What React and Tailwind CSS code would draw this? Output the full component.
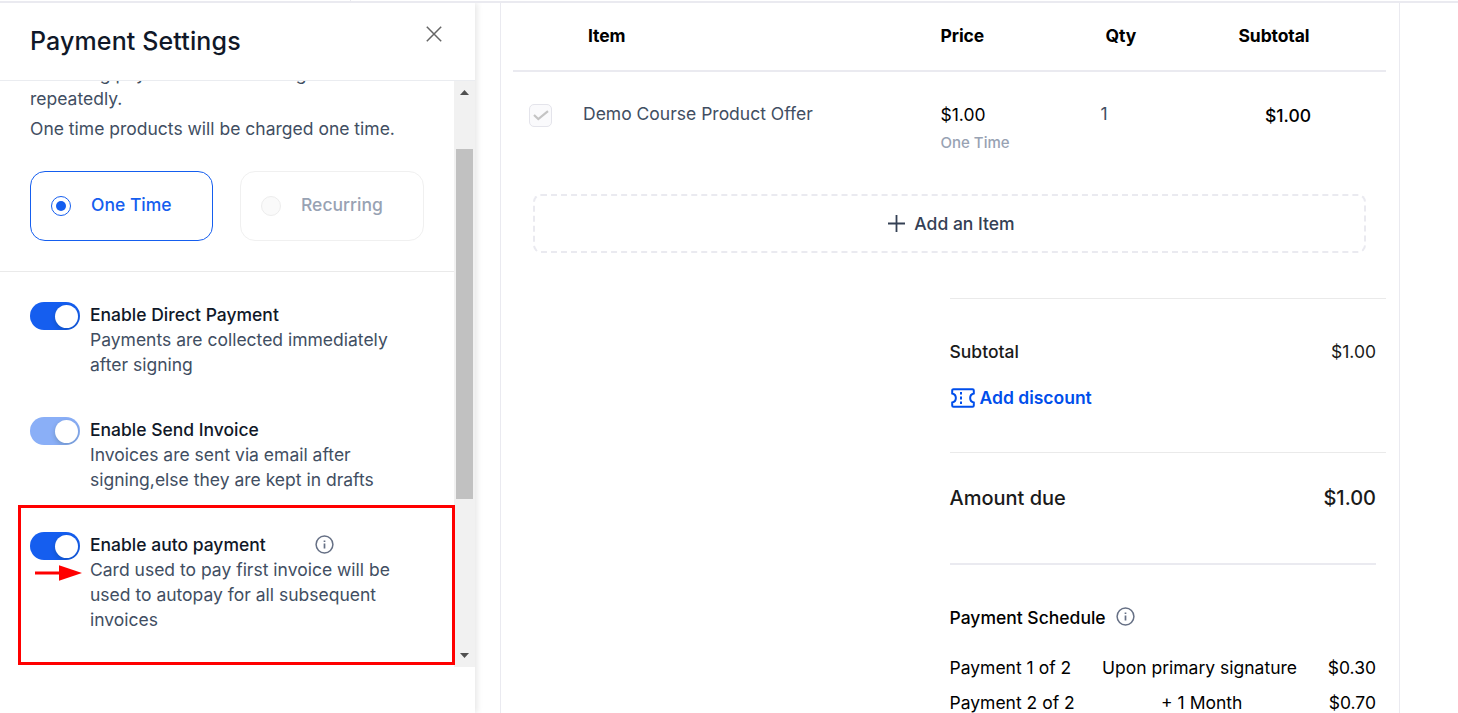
import { useState } from "react";

const SETTINGS = [
  {
    key: "direct",
    title: "Enable Direct Payment",
    text: "Payments are collected immediately after signing",
  },
  {
    key: "invoice",
    title: "Enable Send Invoice",
    text: "Invoices are sent via email after signing,else they are kept in drafts",
    disabled: true,
  },
  {
    key: "auto",
    title: "Enable auto payment",
    text: "Card used to pay first invoice will be used to autopay for all subsequent invoices",
    info: true,
  },
];

const SCHEDULE = [
  { name: "Payment 1 of 2", when: "Upon primary signature", amount: "$0.30" },
  { name: "Payment 2 of 2", when: "+ 1 Month", amount: "$0.70" },
];

export default function App() {
  return (
    <div className="relative flex h-[713px] w-[1458px] flex-col overflow-hidden bg-white font-['Inter',sans-serif] text-[17.5px] leading-[25px]">
      <div className="z-10 flex h-[3px] shrink-0 border-b-2 border-[#eaeaf0] bg-white">
        <div className="h-px w-[351px] border-r border-[#eaeaf0]" />
      </div>
      <div className="flex min-h-0 flex-1">
        <SettingsPanel />
        <Document />
      </div>
      <Annotation />
    </div>
  );
}

function SettingsPanel() {
  const [mode, setMode] = useState("one");
  const [on, setOn] = useState({ direct: true, invoice: true, auto: true });

  return (
    <aside className="flex w-[475px] shrink-0 flex-col bg-white shadow-[2px_0_6px_rgba(0,0,0,0.1)]">
      <header className="flex h-[78px] shrink-0 items-start justify-between border-b border-[#eaecf0] pr-[33px] pl-[30px]">
        <h2 className="pt-[20px] text-[25px] leading-[36px] font-[450] tracking-[0.13px] text-[#101828]">
          Payment Settings
        </h2>
        <button className="mt-[23px]">
          <svg width="16" height="16" viewBox="0 0 16 16" className="stroke-[#666]">
            <path d="M.8.8l14.4 14.4M15.2.8L.8 15.2" strokeWidth="1.5" fill="none" />
          </svg>
        </button>
      </header>

      <div className="flex h-[586px]">
        <div className="flex w-[454px] flex-col overflow-hidden">
          <section className="-mt-[20px] shrink-0 border-b border-[#eaeaea] px-[30px] pb-[30px] text-[#414e62]">
            <p className="w-[320px]">Recurring payments will be charged repeatedly.</p>
            <p className="mt-[5px] whitespace-nowrap">One time products will be charged one time.</p>
            <div className="mt-[30px] flex gap-[27px]">
              <RadioCard label="One Time" checked={mode === "one"} onClick={() => setMode("one")} />
              <RadioCard label="Recurring" disabled />
            </div>
          </section>

          <section className="flex flex-col gap-[40px] px-[30px] pt-[30px]">
            {SETTINGS.map((s) => (
              <div key={s.key} className="flex gap-[10px]">
                <Toggle
                  on={on[s.key]}
                  disabled={s.disabled}
                  onClick={() => setOn((p) => ({ ...p, [s.key]: !p[s.key] }))}
                />
                <div className="w-[305px]">
                  <div className="flex items-center font-medium text-[#101828]">
                    {s.title}
                    {s.info && <InfoIcon className="ml-[49px] text-[#667085]" />}
                  </div>
                  <p className="text-[#414e62]">{s.text}</p>
                </div>
              </div>
            ))}
          </section>
        </div>
        <Scrollbar />
      </div>
    </aside>
  );
}

function RadioCard({ label, checked, disabled, onClick }) {
  return (
    <button
      onClick={onClick}
      disabled={disabled}
      className={
        checked
          ? "flex h-[70px] w-[183px] items-center rounded-[15px] border border-[#155eef] pl-[20px] font-medium text-[#155eef]"
          : "flex h-[70px] w-[184px] items-center rounded-[15px] border border-[#f0f0f0] pl-[20px] font-medium text-[#98a2b3]"
      }
    >
      <span
        className={
          checked
            ? "flex size-[20px] items-center justify-center rounded-full border border-[#155eef]"
            : "flex size-[20px] items-center justify-center rounded-full border border-[#ededed] bg-[#fafafa]"
        }
      >
        {checked && <span className="size-[10px] rounded-full bg-[#155eef]" />}
      </span>
      <span className="ml-[20px] pb-[3px]">{label}</span>
    </button>
  );
}

function Toggle({ on, disabled, onClick }) {
  return (
    <button
      onClick={onClick}
      disabled={disabled}
      className={
        disabled
          ? "flex h-[28px] w-[50px] shrink-0 items-center justify-end overflow-hidden rounded-full bg-[#8aaff7] pr-[2px]"
          : on
            ? "flex h-[28px] w-[50px] shrink-0 items-center justify-end overflow-hidden rounded-full bg-[#155eef] pr-[2px]"
            : "flex h-[28px] w-[50px] shrink-0 items-center overflow-hidden rounded-full bg-gray-300 pl-[2px]"
      }
    >
      <span className="size-[23px] rounded-full bg-white shadow-[0_2px_5px_rgba(0,35,11,0.2)]" />
    </button>
  );
}

function Scrollbar() {
  return (
    <div className="flex w-[21px] flex-col items-center bg-[#f1f1f1]">
      <svg width="9" height="5" viewBox="0 0 9 5" className="mt-[9px] fill-[#505050]">
        <path d="M0 5L4.5 0L9 5z" />
      </svg>
      <div className="mt-[54px] mr-px h-[350px] w-[17px] bg-[#c1c1c1]" />
      <svg width="9" height="5" viewBox="0 0 9 5" className="mt-auto mb-[9px] fill-[#505050]">
        <path d="M0 0L4.5 5L9 0z" />
      </svg>
    </div>
  );
}

function Document() {
  return (
    <main className="ml-[25px] flex w-[900px] flex-col border-x border-[#eaeaf0] pr-[13px] pl-[12px]">
      <div className="grid h-[69px] shrink-0 grid-cols-[427.5px_165px_133px_1fr] items-center border-b-2 border-[#eaeaf0] pb-[2px] font-bold tracking-[-0.1px] text-black">
        <span className="pl-[75px]">Item</span>
        <span>Price</span>
        <span>Qty</span>
        <span>Subtotal</span>
      </div>

      <div className="grid h-[122px] shrink-0 grid-cols-[70px_357.5px_160px_110px_100.5px] items-start text-[#414e62]">
        <span className="mt-[32px] ml-[16px] flex size-[23px] items-center justify-center rounded-[5px] border border-[#e4e4eb] bg-[#fafafc]">
          <svg width="16" height="11" viewBox="0 0 16 11" fill="none" className="-mt-px">
            <path d="M1 5L5.3 9L15 1.2" stroke="#c4c4c4" strokeWidth="2.2" />
          </svg>
        </span>
        <span className="mt-[29px]">Demo Course Product Offer</span>
        <div className="mt-[30px]">
          <div className="text-black">$1.00</div>
          <div className="mt-[3px] text-[15px] font-medium text-[#98a2b3]">One Time</div>
        </div>
        <span className="mt-[29px]">1</span>
        <span className="mt-[31px] text-right font-medium text-black">$1.00</span>
      </div>

      <button className="mr-[20px] ml-[20px] flex h-[59px] shrink-0 items-center justify-center gap-[9px] rounded-lg border-2 border-dashed border-[#eaeaf0] pl-[4px] font-medium text-[#344054]">
        <svg width="17" height="17" viewBox="0 0 17 17" className="stroke-[#344054]">
          <path d="M8.5 0v17M0 8.5h17" strokeWidth="1.8" />
        </svg>
        Add an Item
      </button>

      <Totals />
    </main>
  );
}

function Totals() {
  return (
    <section className="mt-[45px] ml-[436.5px] flex shrink-0 flex-col text-[#1a1a1a]">
      <div className="flex h-[154px] flex-col border-t border-[#eaeaea] pt-[40px] pr-[10px]">
        <div className="flex justify-between">
          <span className="font-medium">Subtotal</span>
          <span>$1.00</span>
        </div>
        <button className="mt-[21px] flex items-center gap-[5px] pl-px font-semibold text-[#004eeb]">
          <TicketIcon />
          Add discount
        </button>
      </div>
      <div className="flex h-[111px] justify-between border-t border-[#eaeaea] pt-[33px] pr-[10px] text-[20px] font-medium">
        <span>Amount due</span>
        <span>$1.00</span>
      </div>
      <div className="mr-[10px] border-t-2 border-[#eaeaf0] pt-[40px] text-black">
        <div className="flex items-center font-medium">
          Payment Schedule
          <InfoIcon className="-mt-[2px] ml-[10.5px] text-[#667085]" />
        </div>
        <div className="mt-[25px] flex flex-col gap-[10px]">
          {SCHEDULE.map((p) => (
            <div key={p.name} className="flex justify-between whitespace-nowrap">
              <span>{p.name}</span>
              <span>{p.when}</span>
              <span>{p.amount}</span>
            </div>
          ))}
        </div>
      </div>
    </section>
  );
}

function InfoIcon({ className }) {
  return (
    <svg width="19" height="19" viewBox="0 0 19 19" fill="none" className={className}>
      <circle cx="9.5" cy="9.5" r="8.4" stroke="currentColor" strokeWidth="1.5" />
      <path d="M9.5 8.6v4.9M9.5 5.4v1.7" stroke="currentColor" strokeWidth="1.7" />
    </svg>
  );
}

function TicketIcon() {
  return (
    <svg width="24" height="20" viewBox="0 0 24 20" fill="none" stroke="#004eeb">
      <path
        d="M2.5 1.2h19a1.3 1.3 0 0 1 1.3 1.3v3a4.6 4.6 0 0 0 0 9v3a1.3 1.3 0 0 1-1.3 1.3h-19a1.3 1.3 0 0 1-1.3-1.3v-3a4.6 4.6 0 0 0 0-9v-3a1.3 1.3 0 0 1 1.3-1.3z"
        strokeWidth="2"
      />
      <path d="M10 4v2.6M10 8.4v3.2M10 13.4V16" strokeWidth="2" />
    </svg>
  );
}

// red callout over the auto payment setting
function Annotation() {
  return (
    <div className="pointer-events-none absolute top-[505px] left-[18px] h-[160px] w-[437px] border-3 border-[#ff0000]">
      <svg width="47" height="16" viewBox="0 0 47 16" className="absolute top-[56.5px] left-[14px]">
        <path d="M0 8h26" stroke="#ff0000" strokeWidth="3" />
        <path d="M24 0.3L47 8L24 15.7z" fill="#ff0000" />
      </svg>
    </div>
  );
}
